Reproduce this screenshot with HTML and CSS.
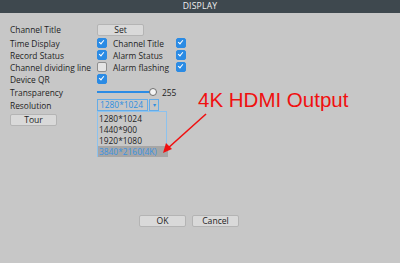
FILE: index.html
```html
<!DOCTYPE html>
<html lang="en">
<head>
    <meta charset="utf-8">
    <title>DISPLAY</title>
    <link rel="stylesheet" href="styles.css">
</head>
<body>
    <div class="titlebar">DISPLAY</div>

    <div class="content">
        <div class="row row-first">
            <span class="label">Channel Title</span>
            <button class="btn btn-set">Set</button>
        </div>
        <div class="row">
            <span class="label">Time Display</span>
            <span class="check on"></span>
            <span class="label2">Channel Title</span>
            <span class="check on"></span>
        </div>
        <div class="row">
            <span class="label">Record Status</span>
            <span class="check on"></span>
            <span class="label2">Alarm Status</span>
            <span class="check on"></span>
        </div>
        <div class="row">
            <span class="label">Channel dividing line</span>
            <span class="check"></span>
            <span class="label2">Alarm flashing</span>
            <span class="check on"></span>
        </div>
        <div class="row">
            <span class="label">Device QR</span>
            <span class="check on"></span>
        </div>
        <div class="row row-gap">
            <span class="label">Transparency</span>
            <div class="slider">
                <div class="slider-track"></div>
                <div class="slider-knob"></div>
            </div>
            <span class="slider-value">255</span>
        </div>
        <div class="row row-gap">
            <span class="label">Resolution</span>
            <div class="select">
                <span class="select-text">1280*1024</span>
                <span class="select-arrow">&#9662;</span>
            </div>
        </div>
        <div class="row row-tour">
            <button class="btn btn-tour">Tour</button>
        </div>

        <div class="footer">
            <button class="btn">OK</button>
            <button class="btn">Cancel</button>
        </div>
    </div>

    <!-- open dropdown -->
    <ul class="dropdown">
        <li>1280*1024</li>
        <li>1440*900</li>
        <li>1920*1080</li>
        <li class="selected">3840*2160(4K)</li>
    </ul>

    <!-- annotation -->
    <div class="note">4K HDMI Output</div>
    <svg class="arrow" width="50" height="50" viewBox="0 0 50 50">
        <line x1="46" y1="5" x2="7" y2="40" stroke="#f01010" stroke-width="1.6"/>
        <polygon points="3,44 6,34 12,40" fill="#f01010"/>
    </svg>
</body>
</html>
```

FILE: styles.css
```css
body {
    margin: 0;
    width: 400px;
    height: 263px;
    background-color: #c7c7c7;
    font-family: "Open Sans", "Noto Sans", sans-serif;
    font-size: 8.4px;
    color: #1e1e1e;
    position: relative;
    overflow: hidden;
}
.titlebar {
    height: 13px;
    line-height: 13px;
    background-color: #3e484e;
    color: #f0f0f0;
    text-align: center;
    font-size: 8.6px;
    letter-spacing: 0.2px;
}
.content {
    padding: 10px 0 0 10px;
}
.row {
    display: flex;
    align-items: center;
    height: 12px;
}
.row-first {
    height: 13px;
    margin-bottom: 1px;
}
.row-gap {
    margin-top: 1px;
}
.row-tour {
    margin-top: 3px;
}
.label {
    width: 87px;
    white-space: nowrap;
}
.label2 {
    width: 63px;
    margin-left: 6px;
    white-space: nowrap;
}
.check {
    width: 8px;
    height: 8px;
    border: 1px solid #8e8e8e;
    border-radius: 2px;
    background-color: #e4e4e4;
    position: relative;
}
.check.on {
    border-color: #2b8be4;
    background-color: #2b8be4;
}
.check.on::after {
    content: "";
    position: absolute;
    left: 2px;
    top: 0px;
    width: 2px;
    height: 4px;
    border-right: 1.4px solid #fff;
    border-bottom: 1.4px solid #fff;
    transform: rotate(40deg);
}
.btn {
    font-family: "Open Sans", "Noto Sans", sans-serif;
    font-size: 8.6px;
    color: #1e1e1e;
    background-color: #d9d9d9;
    border: 1px solid #b4b4b4;
    border-radius: 2px;
    width: 47px;
    height: 12px;
    padding: 0;
    line-height: 10px;
}
.slider {
    width: 60px;
    height: 10px;
    position: relative;
}
.slider-track {
    position: absolute;
    left: 0;
    right: 4px;
    top: 4px;
    height: 2px;
    background-color: #2b8be4;
}
.slider-knob {
    position: absolute;
    right: 0;
    top: 1px;
    width: 6px;
    height: 6px;
    border: 1px solid #6f6f6f;
    border-radius: 50%;
    background-color: #f4f4f4;
}
.slider-value {
    margin-left: 5px;
}
.select {
    display: flex;
    height: 12px;
    width: 62px;
}
.select-text {
    width: 51px;
    border: 1px solid #64ace8;
    color: #2f8ee0;
    line-height: 10px;
    padding-left: 2px;
    box-sizing: border-box;
    height: 12px;
    white-space: nowrap;
}
.select-arrow {
    width: 10px;
    margin-left: 1px;
    border: 1px solid #64ace8;
    color: #2f8ee0;
    font-size: 6px;
    line-height: 10px;
    text-align: center;
    box-sizing: border-box;
    height: 12px;
}
.footer {
    display: flex;
    gap: 6px;
    margin: 89px 0 0 129px;
}
.dropdown {
    position: absolute;
    left: 97px;
    top: 111px;
    width: 70px;
    height: 46px;
    margin: 0;
    padding: 1px 0 0 0;
    list-style: none;
    border: 1px solid #8cc2ee;
    box-sizing: border-box;
    background-color: #c7c7c7;
}
.dropdown li {
    height: 11px;
    line-height: 11px;
    padding-left: 1px;
    white-space: nowrap;
}
.dropdown li.selected {
    background-color: #a6a6a6;
    color: #3a93e2;
    margin-right: -2px;
}
.note {
    position: absolute;
    left: 198px;
    top: 88px;
    font-family: "Liberation Sans", Arial, sans-serif;
    font-size: 20.5px;
    color: #f01010;
    white-space: nowrap;
}
.arrow {
    position: absolute;
    left: 160px;
    top: 109px;
}
```
